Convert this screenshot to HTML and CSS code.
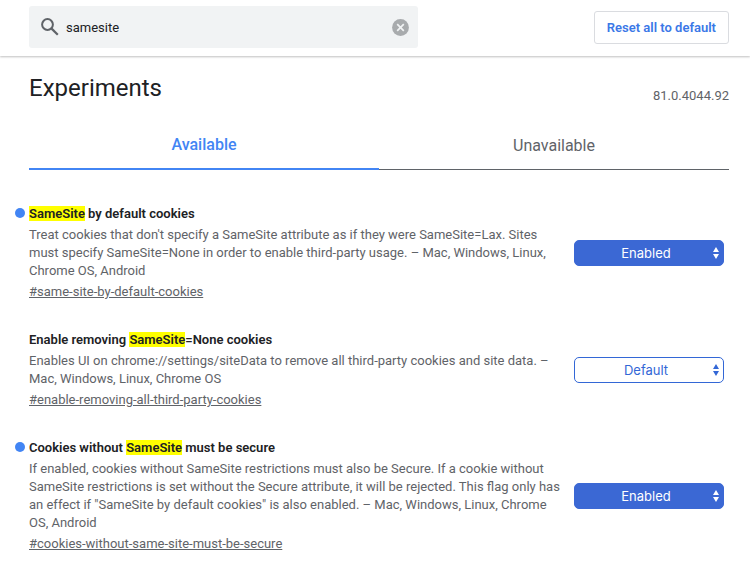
FILE: index.html
```html
<!DOCTYPE html>
<html lang="en">
<head>
<meta charset="utf-8">
<meta name="viewport" content="width=device-width, initial-scale=1">
<title>Experiments</title>
<link rel="stylesheet" href="styles.css">
</head>
<body>
<header class="header">
  <div class="search">
    <svg class="search-icon" viewBox="0 0 18 18" aria-hidden="true"><circle cx="6.5" cy="6.5" r="5.4" fill="none" stroke="#5f6368" stroke-width="2"/><path d="M10.6 10.6 16.8 16.8" fill="none" stroke="#5f6368" stroke-width="2.2"/></svg>
    <input class="search-input" type="text" value="samesite" aria-label="Search flags">
    <button class="clear" type="button" aria-label="Clear search">
      <svg class="clear-icon" viewBox="0 0 17 17" aria-hidden="true"><circle cx="8.5" cy="8.5" r="8.4" fill="#a8abad"/><path d="M5.2 5.2 11.8 11.8M11.8 5.2 5.2 11.8" stroke="#f1f3f4" stroke-width="1.7"/></svg>
    </button>
  </div>
  <button class="reset" type="button">Reset all to default</button>
</header>
<main class="content">
  <div class="heading">
    <h1 class="title">Experiments</h1>
    <span class="version">81.0.4044.92</span>
  </div>
  <div class="tabs" role="tablist">
    <button class="tab tab-selected" type="button" role="tab" aria-selected="true">Available</button>
    <button class="tab" type="button" role="tab" aria-selected="false">Unavailable</button>
  </div>
  <div class="flags">
    <section class="flag">
      <div class="flag-text">
        <h2 class="flag-name changed"><label for="f1"><mark>SameSite</mark> by default cookies</label></h2>
        <p class="description">Treat cookies that don't specify a SameSite attribute as if they were SameSite=Lax. Sites must specify SameSite=None in order to enable third-party usage. – Mac, Windows, Linux, Chrome OS, Android</p>
        <a class="permalink" href="#same-site-by-default-cookies">#same-site-by-default-cookies</a>
      </div>
      <div class="picker picker-on">
        <select class="select" id="f1"><option>Default</option><option selected>Enabled</option><option>Disabled</option></select>
        <svg class="arrows" viewBox="0 0 6 12" aria-hidden="true"><path d="M3 0 6 5H0zM3 12 0 7H6z" fill="currentColor"/></svg>
      </div>
    </section>
    <section class="flag">
      <div class="flag-text">
        <h2 class="flag-name"><label for="f2">Enable removing <mark>SameSite</mark>=None cookies</label></h2>
        <p class="description">Enables UI on chrome://settings/siteData to remove all third-party cookies and site data. – Mac, Windows, Linux, Chrome OS</p>
        <a class="permalink" href="#enable-removing-all-third-party-cookies">#enable-removing-all-third-party-cookies</a>
      </div>
      <div class="picker">
        <select class="select" id="f2"><option selected>Default</option><option>Enabled</option><option>Disabled</option></select>
        <svg class="arrows" viewBox="0 0 6 12" aria-hidden="true"><path d="M3 0 6 5H0zM3 12 0 7H6z" fill="currentColor"/></svg>
      </div>
    </section>
    <section class="flag">
      <div class="flag-text">
        <h2 class="flag-name changed"><label for="f3">Cookies without <mark>SameSite</mark> must be secure</label></h2>
        <p class="description">If enabled, cookies without SameSite restrictions must also be Secure. If a cookie without SameSite restrictions is set without the Secure attribute, it will be rejected. This flag only has an effect if "SameSite by default cookies" is also enabled. – Mac, Windows, Linux, Chrome OS, Android</p>
        <a class="permalink" href="#cookies-without-same-site-must-be-secure">#cookies-without-same-site-must-be-secure</a>
      </div>
      <div class="picker picker-on">
        <select class="select" id="f3"><option>Default</option><option selected>Enabled</option><option>Disabled</option></select>
        <svg class="arrows" viewBox="0 0 6 12" aria-hidden="true"><path d="M3 0 6 5H0zM3 12 0 7H6z" fill="currentColor"/></svg>
      </div>
    </section>
  </div>
</main>
</body>
</html>
```
FILE: styles.css
```css
* {
  box-sizing: border-box;
}

body {
  margin: 0;
  background: #fff;
  color: #202124;
  font: 13px/18px Roboto, sans-serif;
}

button,
input {
  font: inherit;
}

.header {
  display: flex;
  align-items: center;
  justify-content: space-between;
  padding: 6px 21px 8px 29px;
  box-shadow: 0 1px 2px rgba(0, 0, 0, 0.25);
}

.search {
  display: flex;
  align-items: center;
  flex: 0 1 389px;
  height: 42px;
  padding: 0 9px 0 12px;
  border-radius: 3px;
  background: #f1f3f4;
}

.search-icon {
  flex: none;
  width: 18px;
  height: 18px;
}

.search-input {
  flex: 1;
  min-width: 0;
  padding: 2px 7px 0;
  border: 0;
  outline: 0;
  background: none;
  color: #202124;
}

.clear {
  display: flex;
  padding: 0;
  border: 0;
  background: none;
}

.clear-icon {
  width: 17px;
  height: 17px;
}

.reset {
  height: 33px;
  padding: 2px 12px 0;
  border: 1px solid #dadce0;
  border-radius: 3px;
  background: #fff;
  color: #3b78e7;
  font-weight: 600;
}

.content {
  padding: 15px 21px 12px 29px;
}

.heading {
  display: flex;
  align-items: flex-end;
  justify-content: space-between;
}

.title {
  margin: 0;
  font-size: 24px;
  font-weight: 400;
  line-height: 34px;
}

.version {
  color: #5f6368;
}

.tabs {
  display: flex;
  align-items: flex-end;
  margin-top: 15px;
}

.tab {
  flex: 1;
  height: 50px;
  padding: 2px 0 0;
  border: 0;
  border-bottom: 1px solid #5f6368;
  background: none;
  color: #5f6368;
  font-size: 16px;
  font-weight: 400;
}

.tab-selected {
  border-bottom: 2px solid #4285f4;
  color: #4285f4;
  font-weight: 500;
}

.flags {
  display: flex;
  flex-direction: column;
  gap: 30px;
  margin-top: 35px;
}

.flag {
  display: flex;
  align-items: center;
  gap: 12px;
  padding-right: 5px;
}

.flag-text {
  display: flex;
  flex: 1;
  flex-direction: column;
  align-items: flex-start;
  gap: 3px;
}

.flag-name {
  position: relative;
  margin: 0;
  font-size: 13px;
  font-weight: 600;
}

.changed::before {
  position: absolute;
  top: 3px;
  left: -14px;
  width: 10px;
  height: 10px;
  border-radius: 50%;
  background: #4285f4;
  content: "";
}

mark {
  background: #ff0;
  color: inherit;
}

.description {
  margin: 0;
  color: #5f6368;
}

.permalink {
  color: #5f6368;
}

.picker {
  position: relative;
  flex: none;
  width: 150px;
  color: #3367d6;
}

.select {
  display: block;
  width: 100%;
  height: 26px;
  padding: 0 6px 0 0;
  border: 1px solid #3367d6;
  border-radius: 5px;
  appearance: none;
  background: #fff;
  color: inherit;
  font: 13px Inter, sans-serif;
  text-align-last: center;
}

.picker-on {
  color: #fff;
}

.picker-on .select {
  background: #3b68d4;
  border-color: #3b68d4;
}

.arrows {
  position: absolute;
  top: 7px;
  right: 5px;
  width: 6px;
  height: 12px;
  pointer-events: none;
}
```
